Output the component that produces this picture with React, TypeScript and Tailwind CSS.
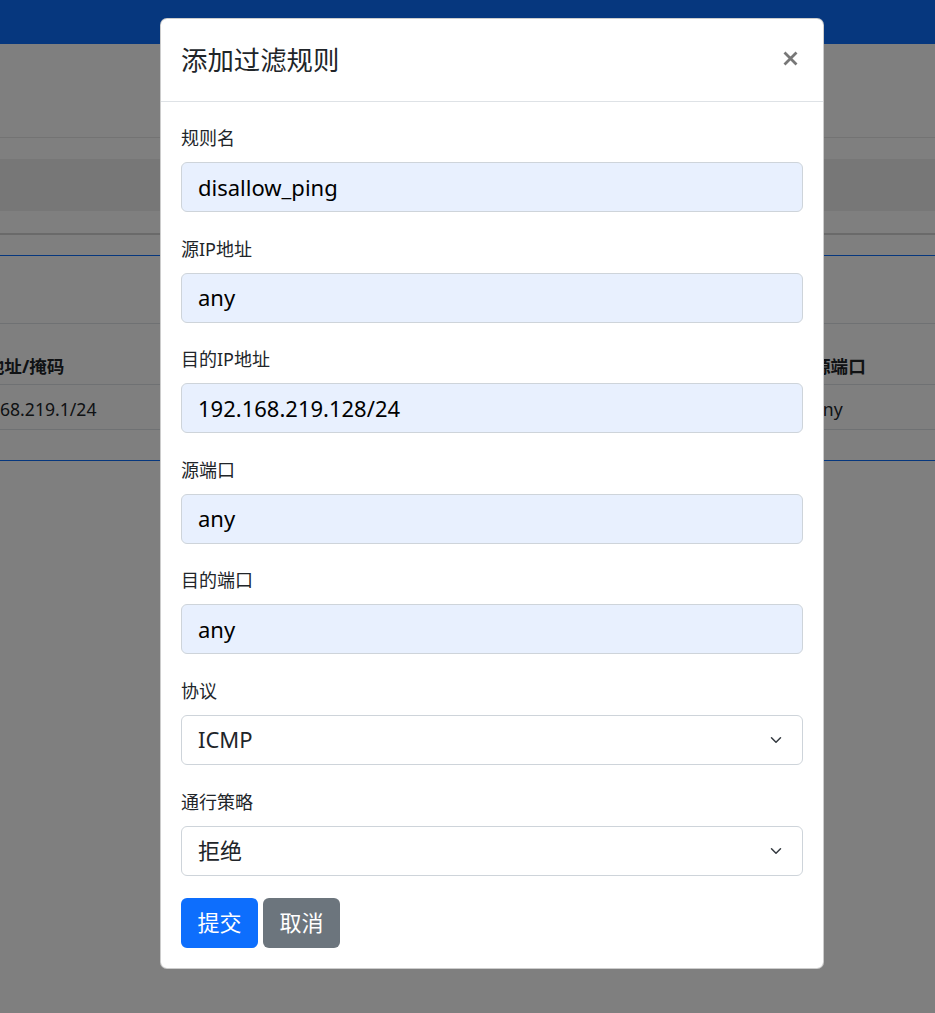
import React from "react";

const FONT = "font-['Noto_Sans','Noto_Sans_CJK_SC',sans-serif]";

function Chevron() {
  return (
    <svg width="16" height="12" viewBox="0 0 16 16" className="shrink-0">
      <path
        d="m2 5 6 6 6-6"
        fill="none"
        stroke="#343a40"
        strokeWidth="2"
        strokeLinecap="round"
        strokeLinejoin="round"
      />
    </svg>
  );
}

function Field({
  label,
  value,
  select,
}: {
  label: string;
  value: string;
  select?: boolean;
}) {
  return (
    <div className="flex flex-col">
      <label className="mb-[11px] text-[18px] leading-[26px] text-[#212529]">{label}</label>
      {select ? (
        <div className="flex h-[50px] items-center justify-between rounded-[6px] border border-[#ced4da] bg-white pl-[16px] pr-[18px] text-[22px] text-[#212529]">
          <span>{value}</span>
          <Chevron />
        </div>
      ) : (
        <div className="flex h-[50px] items-center rounded-[6px] border border-[#ced4da] bg-[#e8f0fe] pl-[16px] text-[22px] text-black">
          {value}
        </div>
      )}
    </div>
  );
}

export default function App() {
  return (
    <div className={`relative h-[1013px] w-[935px] overflow-hidden bg-white ${FONT}`}>
      {/* page underneath */}
      <nav className="h-[44px] bg-[#0d6efd]" />
      <div className="h-[94px] border-b border-[#e6e6e6]" />
      <div className="mt-[21px] h-[52px] bg-[#efefef]" />
      <div className="mt-[22px] h-[2px] bg-[#d4d4d4]" />
      <div className="mt-[20px] border-t border-[#0d6efd]">
        <div className="h-[68px] border-b border-[#dee2e6]" />
        <div className="flex h-[61px] items-end border-b border-[#dee2e6] pb-[5px] text-[17.6px] font-bold text-[#212529]">
          <div className="ml-[-31px] w-[844px] whitespace-nowrap">IP地址/掩码</div>
          <div className="whitespace-nowrap">源端口</div>
        </div>
        <div className="flex h-[45px] items-center border-b border-[#dee2e6] pt-[5px] text-[17.6px] text-[#212529]">
          <div className="ml-[-45px] w-[858px] whitespace-nowrap">192.168.219.1/24</div>
          <div className="whitespace-nowrap">any</div>
        </div>
        <div className="h-[31px] border-b border-[#0d6efd]" />
      </div>

      {/* backdrop */}
      <div className="absolute inset-0 bg-black/50" />

      {/* modal */}
      <div className="absolute left-[160px] top-[18px] w-[664px] rounded-[7px] border border-black/20 bg-white">
        <div className="flex h-[83px] items-center justify-between border-b border-[#dee2e6] pl-[20px] pr-[25px]">
          <h4 className="text-[26.4px] font-normal leading-[32px] text-[#212529]">添加过滤规则</h4>
          <svg width="15" height="15" viewBox="0 0 15 15" className="-mt-[4px]">
            <path
              d="M1.5 1.5 13.5 13.5M13.5 1.5 1.5 13.5"
              fill="none"
              stroke="#777"
              strokeWidth="2.8"
            />
          </svg>
        </div>
        <div className="flex flex-col px-[20px] pb-[20px] pt-[23px]">
          <div className="flex flex-col gap-[23.6px]">
            <Field label="规则名" value="disallow_ping" />
            <Field label="源IP地址" value="any" />
            <Field label="目的IP地址" value="192.168.219.128/24" />
            <Field label="源端口" value="any" />
            <Field label="目的端口" value="any" />
            <Field label="协议" value="ICMP" select />
            <Field label="通行策略" value="拒绝" select />
          </div>
          <div className="mt-[22px] flex gap-[5px]">
            <button className="flex h-[50px] w-[77px] items-center justify-center rounded-[6px] bg-[#0d6efd] text-[22px] text-white">
              提交
            </button>
            <button className="flex h-[50px] w-[77px] items-center justify-center rounded-[6px] bg-[#6c757d] text-[22px] text-white">
              取消
            </button>
          </div>
        </div>
      </div>
    </div>
  );
}
